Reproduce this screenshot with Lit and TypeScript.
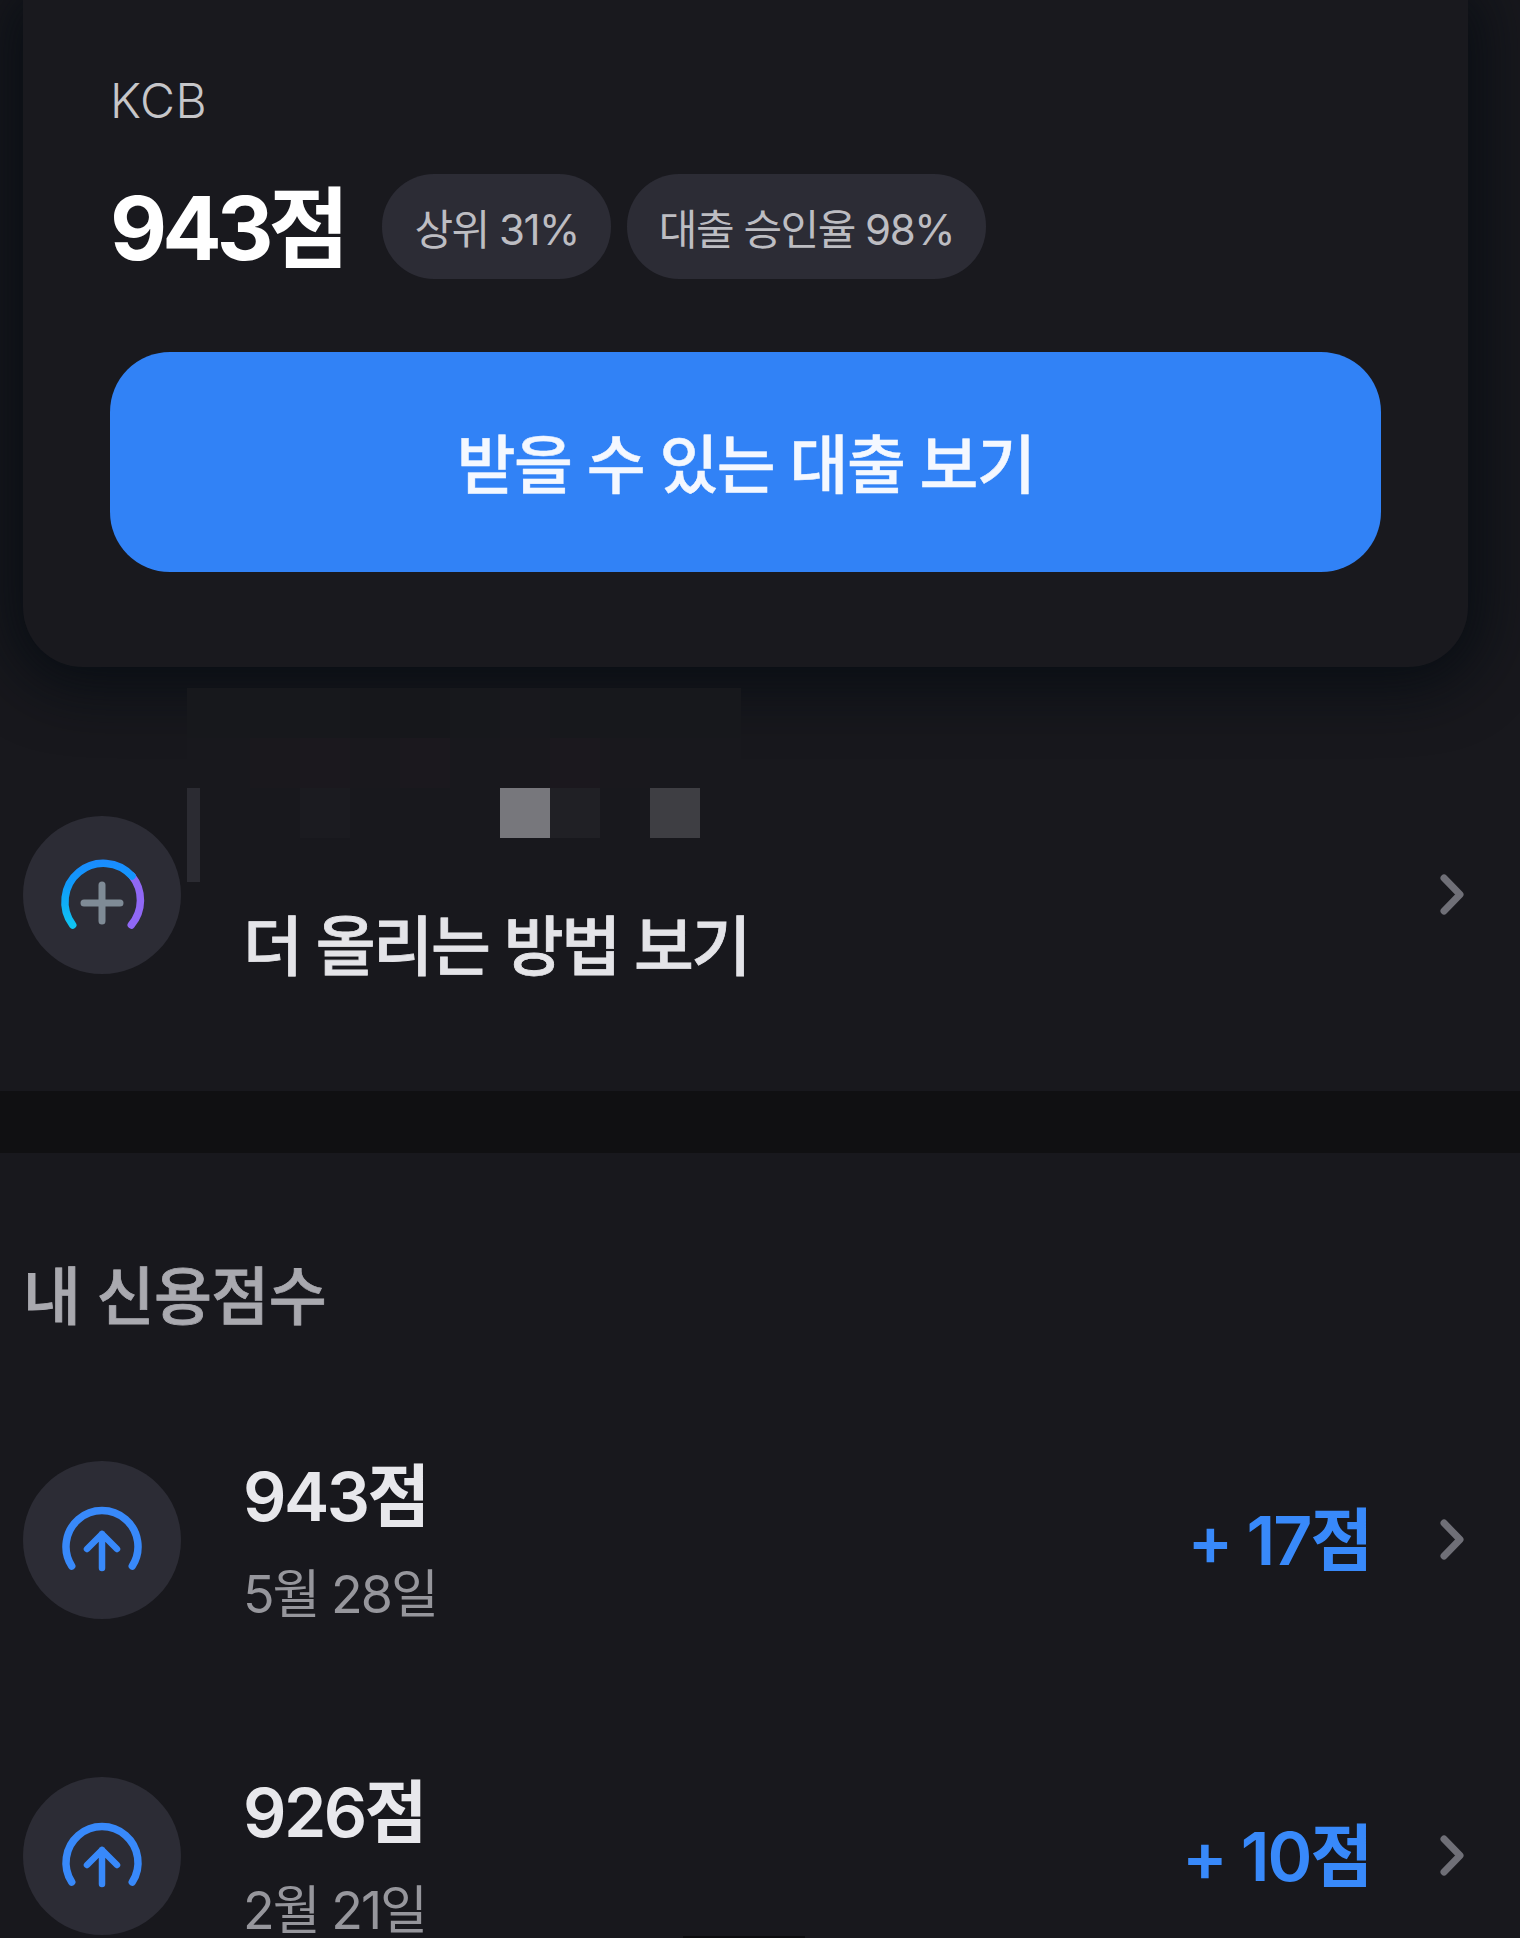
import { LitElement, html, css, svg } from "lit";
import { customElement } from "lit/decorators.js";

// [column, row, colour] of the censoring mosaic above the "더 올리는" label
const cells: [number, number, string][] = [
  [0, 0, "#17181c"], [1, 0, "#17181c"], [2, 0, "#17181c"], [3, 0, "#17181c"], [4, 0, "#16171b"], [5, 0, "#16171b"], [6, 0, "#17181c"], [7, 0, "#18181d"], [8, 0, "#17181c"], [9, 0, "#17181c"], [10, 0, "#17181c"], [11, 0, "#17181c"],
  [0, 1, "#18181d"], [1, 1, "#18181d"], [2, 1, "#1a181d"], [3, 1, "#1b181e"], [4, 1, "#19181d"], [5, 1, "#1b181e"], [6, 1, "#18181d"], [7, 1, "#19181d"], [8, 1, "#1b181e"], [9, 1, "#19181d"], [10, 1, "#18181d"], [11, 1, "#18181d"],
  [3, 2, "#1b1b20"], [7, 2, "#77777c"], [8, 2, "#202025"], [10, 2, "#3e3e43"],
];

const chevron = svg`<path d="M5 5 L21 21.5 L5 38" fill="none" stroke="#6f6f77" stroke-width="7" stroke-linecap="round" stroke-linejoin="round"/>`;

@customElement("app-root")
export class AppRoot extends LitElement {
  static styles = css`
    :host {
      display: block;
      width: 1520px;
      height: 1938px;
      overflow: hidden;
      position: relative;
      background: #18181d;
      font-family: Inter, "Noto Sans CJK KR", sans-serif;
    }
    .top {
      height: 787px;
      padding: 0 52px 0 23px;
      box-sizing: border-box;
    }
    .card {
      height: 667px;
      box-sizing: border-box;
      padding: 73px 87px 0;
      background: #19191e;
      border-radius: 0 0 60px 60px;
      box-shadow: 0 6px 60px 14px rgba(5, 11, 17, 0.8);
    }
    .kcb {
      font-size: 48px;
      line-height: 56px;
      color: #c6c6c9;
      font-weight: 300;
      letter-spacing: 0.6px;
    }
    .score {
      display: flex;
      align-items: center;
      gap: 16px;
      margin-top: 45px;
    }
    .score b {
      font-size: 88px;
      line-height: 101px;
      padding-top: 4px;
      font-weight: 700;
      color: #fff;
      letter-spacing: -5px;
      margin-right: 22px;
    }
    .pill {
      height: 105px;
      padding: 0 32px;
      display: flex;
      align-items: center;
      border-radius: 52px;
      background: #2c2c35;
      color: #bdbdc2;
      font-size: 42px;
      letter-spacing: -1.5px;
    }
    .cta {
      margin-top: 73px;
      height: 220px;
      width: 1271px;
      border-radius: 60px;
      background: #3182f6;
      color: #f4f8ff;
      font-size: 64px;
      font-weight: 500;
      letter-spacing: -1.6px;
      -webkit-text-stroke: 0.5px #f4f8ff;
      padding-bottom: 4px;
      box-sizing: border-box;
      display: flex;
      align-items: center;
      justify-content: center;
    }
    .more {
      position: relative;
      height: 304px;
      box-sizing: border-box;
      padding: 29px 55px 0 23px;
      display: flex;
      align-items: flex-start;
    }
    .mosaic {
      position: absolute;
      left: 187px;
      top: -99px;
      display: grid;
      grid-template-columns: 13px repeat(10, 50px) 41px;
      grid-auto-rows: 50px;
    }
    .strip {
      position: absolute;
      left: 187px;
      top: 1px;
      width: 13px;
      height: 94px;
      background: #2b2b32;
    }
    .disc {
      width: 158px;
      height: 158px;
      border-radius: 50%;
      background: #2c2c35;
      flex: none;
      display: flex;
      align-items: center;
      justify-content: center;
    }
    .more-label {
      margin: 92px 0 0 62px;
      font-size: 65px;
      line-height: 78px;
      font-weight: 500;
      color: #e4e4e8;
      letter-spacing: -2.2px;
      -webkit-text-stroke: 0.8px #e4e4e8;
      flex: 1;
    }
    .more .chev {
      margin-top: 57px;
    }
    .chev {
      width: 26px;
      height: 44px;
      flex: none;
    }
    .band {
      height: 62px;
      background: #101012;
    }
    .heading {
      margin: 105px 0 0 23px;
      font-size: 63px;
      line-height: 76px;
      font-weight: 500;
      color: #a9a9af;
      letter-spacing: -0.6px;
      -webkit-text-stroke: 0.8px #a9a9af;
    }
    .list {
      display: flex;
      flex-direction: column;
      gap: 158px;
      margin-top: 127px;
      padding: 0 55px 0 23px;
    }
    .row {
      height: 158px;
      display: flex;
      align-items: center;
    }
    .txt {
      flex: 1;
      margin-left: 62px;
      display: flex;
      flex-direction: column;
      gap: 33px;
    }
    .title {
      font-size: 68px;
      line-height: 76px;
      font-weight: 600;
      color: #e8e8ec;
      letter-spacing: -2.5px;
    }
    .sub {
      font-size: 52px;
      line-height: 56px;
      color: #96969c;
      letter-spacing: -2px;
    }
    .delta {
      font-size: 68px;
      line-height: 82px;
      font-weight: 600;
      color: #3889fa;
      letter-spacing: -2px;
      margin-right: 68px;
    }
    .home {
      position: absolute;
      left: 683px;
      bottom: 0;
      width: 122px;
      height: 2px;
      background: #0c0c0e;
    }
  `;

  private up() {
    return html`<svg width="90" height="74" viewBox="0 0 90 74">
      <path d="M14.7 63 A36 36 0 1 1 75.3 63" fill="none" stroke="#3889fa" stroke-width="7.5" stroke-linecap="round"/>
      <path d="M45 65 V31 M30 46 L45 31 L60 46" fill="none" stroke="#3889fa" stroke-width="6.5" stroke-linecap="round" stroke-linejoin="round"/>
    </svg>`;
  }

  private row(title: string, sub: string, delta: string) {
    return html`<div class="row">
      <div class="disc">${this.up()}</div>
      <div class="txt">
        <div class="title">${title}</div>
        <div class="sub">${sub}</div>
      </div>
      <div class="delta">${delta}</div>
      <svg class="chev" viewBox="0 0 26 44">${chevron}</svg>
    </div>`;
  }

  render() {
    return html`
      <div class="top">
        <div class="card">
          <div class="kcb">KCB</div>
          <div class="score">
            <b>943점</b>
            <div class="pill">상위 31%</div>
            <div class="pill">대출 승인율 98%</div>
          </div>
          <div class="cta">받을 수 있는 대출 보기</div>
        </div>
      </div>
      <div class="more">
        <div class="mosaic">
          ${cells.map(
            ([c, r, col]) =>
              html`<i style="grid-column:${c + 1};grid-row:${r + 1};background:${col}"></i>`
          )}
        </div>
        <div class="strip"></div>
        <div class="disc">
          <svg width="92" height="80" viewBox="0 0 92 80">
            <defs>
              <linearGradient id="g" gradientUnits="userSpaceOnUse" x1="0" y1="70" x2="0" y2="6">
                <stop offset="0" stop-color="#0fc4f2"/>
                <stop offset="0.6" stop-color="#0f9cfb"/>
                <stop offset="1" stop-color="#1a8cff"/>
              </linearGradient>
            </defs>
            <path d="M76 21 A38.5 38.5 0 0 1 75.3 70" fill="none" stroke="#9068f5" stroke-width="7.5" stroke-linecap="round"/>
            <path d="M16.7 70 A38.5 38.5 0 0 1 76 21" fill="none" stroke="url(#g)" stroke-width="7.5" stroke-linecap="round"/>
            <path d="M46 30 V66 M28 48 H64" fill="none" stroke="#7f8b96" stroke-width="7" stroke-linecap="round"/>
          </svg>
        </div>
        <div class="more-label">더 올리는 방법 보기</div>
        <svg class="chev" viewBox="0 0 26 44">${chevron}</svg>
      </div>
      <div class="band"></div>
      <div class="heading">내 신용점수</div>
      <div class="list">
        ${this.row("943점", "5월 28일", "+ 17점")}
        ${this.row("926점", "2월 21일", "+ 10점")}
      </div>
      <div class="home"></div>
    `;
  }
}
